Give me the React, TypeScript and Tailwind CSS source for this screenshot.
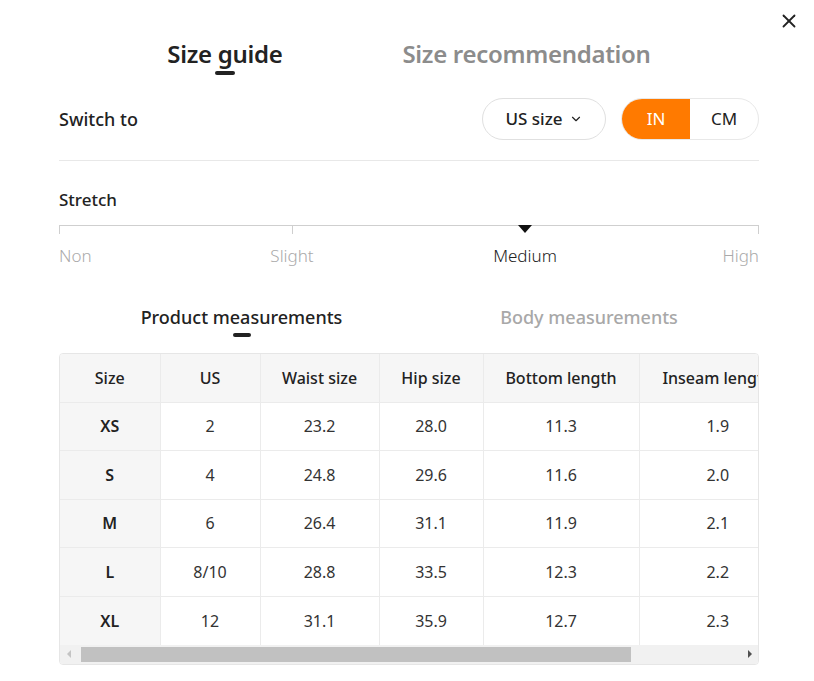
import React from "react"
import { X, ChevronDown } from "lucide-react"

const rows = [
    { size: "XS", us: "2", waist: "23.2", hip: "28.0", bottom: "11.3", inseam: "1.9" },
    { size: "S", us: "4", waist: "24.8", hip: "29.6", bottom: "11.6", inseam: "2.0" },
    { size: "M", us: "6", waist: "26.4", hip: "31.1", bottom: "11.9", inseam: "2.1" },
    { size: "L", us: "8/10", waist: "28.8", hip: "33.5", bottom: "12.3", inseam: "2.2" },
    { size: "XL", us: "12", waist: "31.1", hip: "35.9", bottom: "12.7", inseam: "2.3" },
]

const font = { fontFamily: '"Noto Sans", "Open Sans", sans-serif' }

export default function App() {
    return (
        <div className="relative w-[814px] h-[681px] bg-white text-[#222]" style={font}>
            <button className="absolute top-[10px] right-[14px] text-[#222]">
                <X className="w-[22px] h-[22px]" strokeWidth={2} />
            </button>

            <div className="ml-[59px] w-[700px]">
                {/* title tabs */}
                <div className="flex justify-center gap-[120px] pt-[38px]">
                    <div className="flex flex-col items-center">
                        <span className="text-[24px] leading-[32px] font-semibold tracking-[-0.3px] text-[#222]">Size guide</span>
                        <span className="mt-[1px] w-[20px] h-[4px] rounded-full bg-[#222]" />
                    </div>
                    <span className="text-[24px] leading-[32px] font-semibold tracking-[-0.3px] text-[#8c8c8c]">Size recommendation</span>
                </div>

                {/* switch */}
                <div className="flex items-center justify-between mt-[23px]">
                    <span className="text-[18px] font-medium text-[#222]">Switch to</span>
                    <div className="flex items-center gap-[15px]">
                        <button className="flex items-center gap-[6px] h-[42px] w-[124px] justify-center rounded-full border border-[#e0e0e0] text-[17px] font-medium text-[#222]">
                            US size
                            <ChevronDown className="w-[14px] h-[14px]" strokeWidth={2} />
                        </button>
                        <div className="flex h-[42px] w-[138px] rounded-full border border-[#e8e8e8] overflow-hidden text-[17px]">
                            <span className="flex-1 flex items-center justify-center bg-[#ff7a00] text-white">IN</span>
                            <span className="flex-1 flex items-center justify-center text-[#222]">CM</span>
                        </div>
                    </div>
                </div>

                <div className="mt-[20px] h-px bg-[#e8e8e8]" />

                {/* stretch */}
                <div className="mt-[27px] text-[17px] font-medium text-[#222] leading-[24px]">Stretch</div>
                <div className="relative mt-[13px] h-[10px]">
                    <div className="absolute left-0 right-0 top-0 h-px bg-[#cfcfcf]" />
                    <div className="absolute left-0 top-0 w-px h-[9px] bg-[#cfcfcf]" />
                    <div className="absolute left-[233px] top-0 w-px h-[9px] bg-[#cfcfcf]" />
                    <div className="absolute right-0 top-0 w-px h-[9px] bg-[#cfcfcf]" />
                    <div className="absolute left-[459px] top-0 w-0 h-0 border-l-[7px] border-r-[7px] border-t-[8px] border-l-transparent border-r-transparent border-t-[#111]" />
                </div>
                <div className="relative h-[26px] mt-[8px] text-[17px] font-light text-[#aaa]">
                    <span className="absolute left-0">Non</span>
                    <span className="absolute left-[233px] -translate-x-1/2">Slight</span>
                    <span className="absolute left-[466px] -translate-x-1/2 text-[#222]">Medium</span>
                    <span className="absolute right-0">High</span>
                </div>

                {/* measurement tabs */}
                <div className="grid grid-cols-2 mt-[35px]">
                    <div className="flex flex-col items-center pl-[15px]">
                        <span className="text-[18px] leading-[26px] font-medium text-[#222]">Product measurements</span>
                        <span className="mt-[3px] w-[18px] h-[4px] rounded-full bg-[#222]" />
                    </div>
                    <span className="text-center pl-[10px] text-[18px] leading-[26px] font-medium text-[#a8a8a8]">Body measurements</span>
                </div>

                {/* table */}
                <div className="mt-[16px] border border-[#e6e6e6] rounded-[4px] overflow-hidden">
                    <div className="overflow-hidden">
                        <table className="table-fixed border-collapse w-[736px] text-[16px] text-[#333]">
                            <colgroup>
                                <col className="w-[100px]" />
                                <col className="w-[100px]" />
                                <col className="w-[119px]" />
                                <col className="w-[104px]" />
                                <col className="w-[156px]" />
                                <col className="w-[157px]" />
                            </colgroup>
                            <thead>
                                <tr className="h-[48px] bg-[#f6f6f6]">
                                    {["Size", "US", "Waist size", "Hip size", "Bottom length", "Inseam length"].map((h, i) => (
                                        <th
                                            key={h}
                                            className={`font-medium text-[#222] text-center whitespace-nowrap border-b border-[#ebebeb] ${i > 0 ? "border-l" : ""}`}
                                        >
                                            {h}
                                        </th>
                                    ))}
                                </tr>
                            </thead>
                            <tbody>
                                {rows.map((r, ri) => (
                                    <tr key={r.size} className="h-[48.5px]">
                                        <td className={`bg-[#f6f6f6] text-center font-semibold text-[#222] border-[#ebebeb] ${ri < rows.length - 1 ? "border-b" : ""}`}>{r.size}</td>
                                        {[r.us, r.waist, r.hip, r.bottom, r.inseam].map((v, i) => (
                                            <td key={i} className={`text-center border-l border-[#ebebeb] ${ri < rows.length - 1 ? "border-b" : ""}`}>
                                                {v}
                                            </td>
                                        ))}
                                    </tr>
                                ))}
                            </tbody>
                        </table>
                    </div>

                    {/* scrollbar */}
                    <div className="flex items-center h-[19px] bg-[#f1f1f1]">
                        <span className="w-[17px] flex justify-center">
                            <span className="w-0 h-0 border-t-[4px] border-b-[4px] border-r-[4px] border-t-transparent border-b-transparent border-r-[#c4c4c4]" />
                        </span>
                        <div className="flex-1 h-[15px] flex">
                            <div className="ml-[4px] w-[550px] h-full bg-[#c1c1c1]" />
                        </div>
                        <span className="w-[17px] flex justify-center">
                            <span className="w-0 h-0 border-t-[4px] border-b-[4px] border-l-[4px] border-t-transparent border-b-transparent border-l-[#505050]" />
                        </span>
                    </div>
                </div>
            </div>
        </div>
    )
}
